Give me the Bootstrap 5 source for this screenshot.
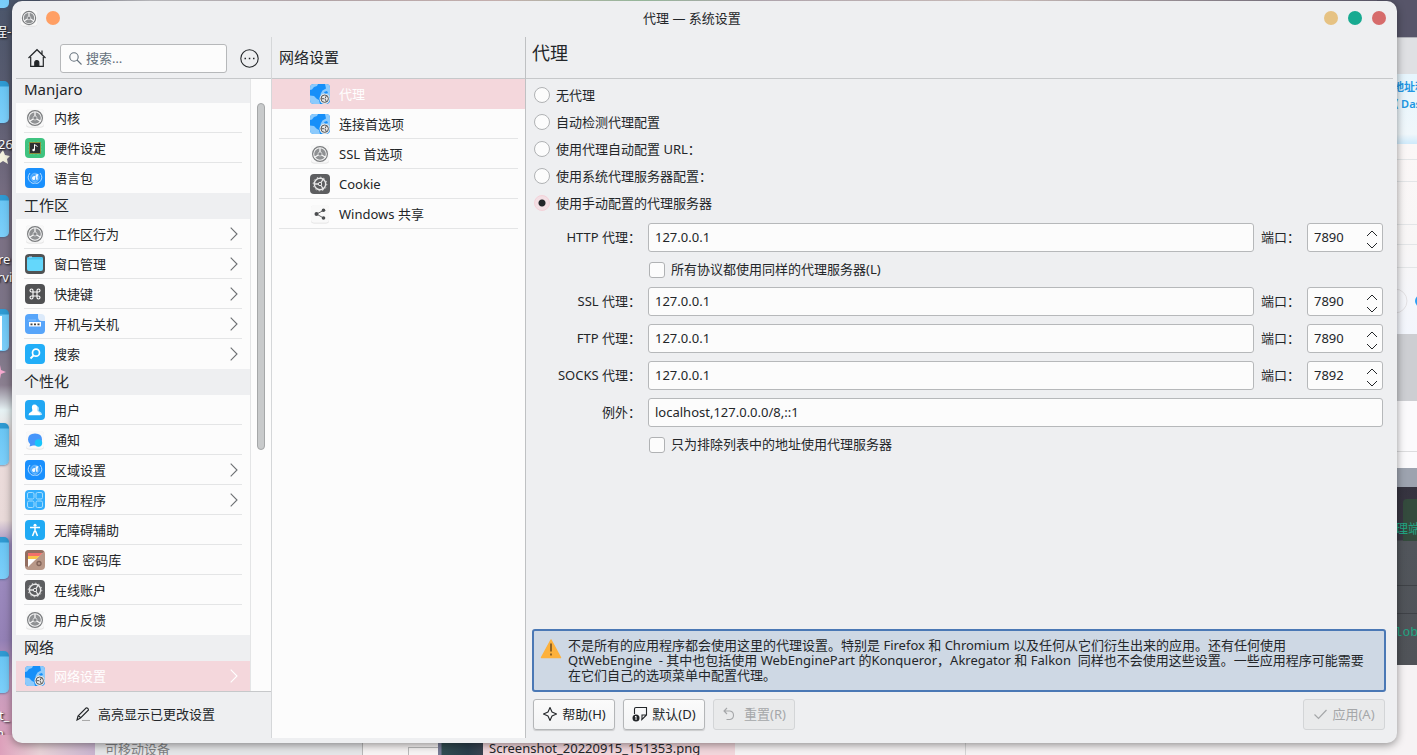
<!DOCTYPE html>
<html lang="zh-CN">
<head>
<meta charset="utf-8">
<meta name="viewport" content="width=device-width, initial-scale=1">
<title>代理 — 系统设置</title>
<link href="https://cdn.jsdelivr.net/npm/bootstrap@5.3.0/dist/css/bootstrap.min.css" rel="stylesheet">
<style>
:root{--face:#eeeff1;--view:#fcfcfc;--ink:#232629;--line:#c6c8ca;--soft:#e4e5e6;--pick:#f4d7dc}
html,body{height:100%}
body{font-family:"Noto Sans","Noto Sans CJK SC",sans-serif;font-size:13px;line-height:20px;color:var(--ink);background:#f6f3f4;overflow:hidden}
button,input{font-family:inherit;font-size:13px;color:inherit}
a{color:inherit;text-decoration:none}
svg{display:block;flex:none}
/* desktop behind the window */
.desk{position:absolute;inset:0;overflow:hidden}
.desk>*{position:absolute}
.wall{left:0;top:0;bottom:0;width:40px;background:linear-gradient(#4b566b 0,#5a5c70 100px,#7b7084 210px,#7b7487 340px,#8b7f90 385px,#e6f2f4 410px,#ecdcdb 440px,#e9dad9 520px,#a08fc2 545px,#9481b6 640px,#c89dbe 680px,#dd9fbb 100%)}
.roof{left:0;right:0;top:0;height:40px;background:linear-gradient(90deg,#56617a 0,#7c7c8c 60px,#cfcfd3 150px,#c9b9bd 320px,#dfc7c5 500px,#a9cfae 640px,#c6bac3 760px,#e4d5d2 1000px,#8f8793 1250px,#575569 100%)}
.dir{left:-20px;width:29px;height:42px;border-radius:5px;background:linear-gradient(#2f9ad2 0,#2f9ad2 5px,#6bc6f4 6px,#7ccffa 100%);box-shadow:0 1px 2px #35588088}
.tag{color:#fff;text-shadow:1px 1px 2px #000;white-space:nowrap}
.rear{right:0;width:40px}
.blue{color:#2196e3;font-weight:600;font-size:11px;white-space:nowrap}
.green{color:#22a583;font-family:"Liberation Mono","Noto Sans CJK SC",monospace;white-space:nowrap}
/* window */
.shell{padding:1px 20px 12px 12px}
.win{background:var(--face);border-radius:10px;box-shadow:0 2px 8px #0000006b}
.titlebar{height:36px;padding:0 11px 2px 8px}
.dot{width:14px;height:14px;border:0;border-radius:50%;padding:0}
.panes{padding:0 4px 5px}
.side{width:256px;border-right:1px solid #d5d7d9}
.mid{width:254px;border-right:1px solid #bfc1c3}
.bar{height:42px;border-bottom:1px solid var(--line)}
.view{background:var(--view)}
.find{width:167px;height:29px;background:var(--view);border:1px solid #b6b8ba;border-radius:3px;color:#66727d}
.find input,.spin input{border:0;background:transparent;outline:0;min-width:0;padding:0}
.find input::placeholder{color:#66727d;opacity:1}
.plain{border:0;background:none;padding:0}
.big{font-size:15px}
.grp{background:var(--face);font-size:15px;height:26px;line-height:24px;margin:0;padding-left:8px;font-weight:400}
.grp.cut{height:24px;line-height:20px}
.ent{height:30px;padding:0 12px 0 9px;gap:9px;position:relative}
.ent::after{content:"";position:absolute;left:8px;right:8px;bottom:0;height:1px;background:var(--soft)}
.ent.end::after,.ent.on::after{display:none}
.ent.on{background:var(--pick);color:#fff}
.mid .ent{padding-left:38px}
.mid .ent::after{left:7px;right:7px}
.ent .go{margin-left:auto;color:#6d7073}
.ent.on .go{color:#fff}
.track{width:21px;border-left:1px solid var(--soft);padding:24px 0 0 6px}
.thumb{width:8px;height:59%;border-radius:4px;background:#c8cacb;border:1px solid #a5a7a8}
.opt{gap:6px;height:27px}
.form-check-input{width:16px;height:16px;margin:0;border:1px solid #b0b2b4;background-color:var(--view);flex:none;box-shadow:none}
.form-check-input[type=checkbox]{border-radius:3px}
.form-check-input[type=radio]:checked{background-color:#f3dfe4;border-color:#f4d2d9;background-image:radial-gradient(circle,#232629 0,#232629 3px,transparent 4px)}
.pform{display:grid;grid-template-columns:107px minmax(0,1fr) auto 76px;gap:8px 7px;align-items:center}
.pform>label{text-align:right;white-space:nowrap;padding-bottom:2px}
.field{height:29px;background:var(--view);border:1px solid #b6b8ba;border-radius:3px;padding:0 6px 2px;width:100%;min-width:0}
.wide{grid-column:2/-1}
.tick{height:19px;gap:6px;padding-left:1px}
.tick label{padding-bottom:2px}
.spin input{width:40px}
.spin button{height:12px;display:flex;align-items:flex-end}
.steps{margin-right:-2px}
.note{border:2px solid #4a78b5;border-radius:3px;background:#ced8e4;padding:7px 6px;gap:6px;line-height:15px;min-height:62px}
.tool{width:82px;height:31px;border:1px solid #b4b6b8;border-radius:3px;background:linear-gradient(#fbfbfb,#f2f3f4);box-shadow:0 1px 1px #00000026;padding:0 0 2px;white-space:nowrap}
.tool:disabled{background:#e9eaeb;border-color:#d3d5d7;box-shadow:none;color:#a5a7a9}
</style>
</head>
<body>
<svg width="0" height="0" class="position-absolute" aria-hidden="true">
 <defs>
  <symbol id="gear" viewBox="0 0 20 20"><rect x="1" y="1.500" width="18" height="18" rx="3" fill="#dcdcdc"/><rect x="1" y="1" width="18" height="17.700" rx="3" fill="#f8f8f8"/><circle cx="10" cy="10" r="7.400" fill="none" stroke="#7b7d7f" stroke-width="1.200"/><circle cx="10" cy="10" r="5.800" fill="#8f9193"/><path d="M10 10V4M10 10l-5.500 3.300M10 10l5.500 3.300" stroke="#f8f8f8" stroke-width="1.300"/><circle cx="10" cy="10" r="2" fill="#85878a" stroke="#f8f8f8" stroke-width=".6"/></symbol>
  <symbol id="dgear" viewBox="0 0 20 20"><rect width="20" height="20" rx="4" fill="#5d5e60"/><circle cx="10" cy="10" r="5.700" fill="none" stroke="#e8e8e8" stroke-width="1.400"/><circle cx="10" cy="10" r="6.800" fill="none" stroke="#e8e8e8" stroke-width="1" stroke-dasharray="1.300 2.260"/><path d="M4.500 10H9M10.500 9.500l3-5M10.500 10.500l3 5" stroke="#e8e8e8" stroke-width="1.300"/><circle cx="10" cy="10" r="1.700" fill="#5d5e60" stroke="#e8e8e8"/></symbol>
  <symbol id="chip" viewBox="0 0 20 20"><rect width="20" height="20" rx="4" fill="#3fc380"/><path d="M3 6h14M3 9h14M3 12h14M6 3v14M9 3v14M13 3v14" stroke="#62d699" stroke-width=".8"/><rect x="4.500" y="4.500" width="11" height="11" fill="#2d3032" stroke="#8a8d3c"/><path d="M9.500 12V6.500l3 2" stroke="#fff" fill="none"/><circle cx="8.600" cy="12" r="1.300" fill="#fff"/></symbol>
  <symbol id="un" viewBox="0 0 20 20"><rect width="20" height="20" rx="4" fill="#1a90fd"/><circle cx="10" cy="9.500" r="4.300" fill="#45a6fd" stroke="#8fcaff" stroke-width=".6"/><path d="M5 5Q.8 10 6 14.500q2 1.500 4 .5 2 1 4-.5 5.200-4.500 1-9.500" fill="none" stroke="#b5dcff" stroke-width="1"/><path d="M7 10.500q0-3 3.500-2.500l-.5 3.500q-2 1.500-3-1zM10.500 6.500l3-.5-1 3 .3 2.500-1.500.5z" fill="#f2f9ff"/></symbol>
  <symbol id="winm" viewBox="0 0 20 20"><rect width="20" height="20" rx="4" fill="#505253"/><rect x="2" y="3" width="16" height="14" rx="2" fill="#64d7fb"/><path d="M2 5.500V5a2 2 0 0 1 2-2h12a2 2 0 0 1 2 2v.5z" fill="#48c4ef"/><path d="M4 3h3" stroke="#bdf"/></symbol>
  <symbol id="cmd" viewBox="0 0 20 20"><rect width="20" height="20" rx="4" fill="#505153"/><path d="M8 8h4v4H8zM8 8H6.500A1.500 1.500 0 1 1 8 6.500zM12 8V6.500A1.500 1.500 0 1 1 13.500 8zM8 12v1.500A1.500 1.500 0 1 1 6.500 12zM12 12h1.500a1.500 1.500 0 1 1-1.500 1.500z" fill="none" stroke="#fff" stroke-width="1.100"/></symbol>
  <symbol id="boot" viewBox="0 0 20 20"><path d="M4 0h9l7 7v9a4 4 0 0 1-4 4H4a4 4 0 0 1-4-4V4a4 4 0 0 1 4-4z" fill="#57a5fa"/><path d="M13 0h3a4 4 0 0 1 4 4v3h-3a4 4 0 0 1-4-4z" fill="#dceafa"/><path d="M3 6h8" stroke="#86bffb"/><rect x="4" y="8" width="12" height="4.500" fill="#fff"/><path d="M5.500 10.300h2M9 10.300h2M12.500 10.300h2" stroke="#444" stroke-width="1.700"/></symbol>
  <symbol id="look" viewBox="0 0 20 20"><rect width="20" height="20" rx="4" fill="#22aef8"/><circle cx="11" cy="8.700" r="3.500" fill="none" stroke="#fff" stroke-width="1.700"/><path d="m8.500 11.500-3 3" stroke="#fff" stroke-width="1.800"/></symbol>
  <symbol id="user" viewBox="0 0 20 20"><rect width="20" height="20" rx="4" fill="#21a7f3"/><path d="M11 6q4 0 2.500 5 3.500 1 3.500 4h-6z" fill="#bfe5fb"/><path d="M9.500 4.500q3.500 0 2.500 5-.5 1.500 1.500 2.500 2 .8 2 3.300H3.500q0-2.500 2.500-3.300 2-.8 1.300-2-1.500-5.500 2.200-5.500z" fill="#fff"/></symbol>
  <symbol id="bell" viewBox="0 0 20 20"><rect x="1" y="1.500" width="18" height="18" rx="3" fill="#dedede"/><rect x="1" y="1" width="18" height="17.700" rx="3" fill="#f9f9f9"/><path d="M3 9.500q0-6 7-6t7 6q0 6-7 6-1 0-2 0l-3.500 1 .7-2.300Q3 12.500 3 9.500z" fill="#4696fb"/><circle cx="13.500" cy="13" r="3.700" fill="#19c5fa"/></symbol>
  <symbol id="apps" viewBox="0 0 20 20"><rect width="20" height="20" rx="4" fill="#32adfc"/><g fill="none" stroke="#a2ddff"><rect x="2.500" y="2.500" width="6.500" height="6.500" rx="1.500"/><rect x="11" y="2.500" width="6.500" height="6.500" rx="1.500"/><rect x="2.500" y="11" width="6.500" height="6.500" rx="1.500"/><rect x="11" y="11" width="6.500" height="6.500" rx="1.500"/></g></symbol>
  <symbol id="acc" viewBox="0 0 20 20"><rect width="20" height="20" rx="4" fill="#20aaf4"/><circle cx="10" cy="5.200" r="1.500" fill="#fff"/><path d="M5 7.500h10M10 7v5M9.500 11l-2 5M10.500 11l2 5" stroke="#fff" stroke-width="1.500" fill="none"/></symbol>
  <symbol id="wallet" viewBox="0 0 20 20"><rect width="20" height="20" rx="4" fill="#b89888"/><path d="M0 16V4a4 4 0 0 1 4-4h12a4 4 0 0 1 3 1.500L3 17z" fill="#926e61"/><path d="M3 3h14.500L3 17z" fill="#fff"/><path d="M3 3h14.500l-3 3H3z" fill="#f2706a"/><path d="M3 6h11.500l-3 3H3z" fill="#f8c44a"/><circle cx="14" cy="13.500" r="2" fill="none" stroke="#806358" stroke-width="1.300"/></symbol>
  <symbol id="net" viewBox="0 0 20 20"><rect width="20" height="20" rx="4" fill="#168ff9"/><path d="M0 6V4a4 4 0 0 1 4-4h4L7 2 4 3 2 5.500zM0 11.500l4 .5 3 3 2 1 1 4H4a4 4 0 0 1-4-4z" fill="#8ccafc"/><path d="M15 0h1a4 4 0 0 1 4 4v9h-9l-.500-3 2-3.500 3.500-2z" fill="#8ccafc"/><path d="M14 8l3-1 1 2-3 1z" fill="#168ff9"/><circle cx="14.700" cy="14.700" r="5.200" fill="#e8e8e8"/><circle cx="14.700" cy="14.700" r="3.700" fill="none" stroke="#55585a" stroke-width="1"/><path d="M11.200 14.700H14M15 14.500l1.500-2.800M15 15l1.500 2.800" stroke="#55585a"/></symbol>
  <symbol id="share" viewBox="0 0 20 20"><rect x="1" y="1.500" width="18" height="18" rx="3" fill="#dedede"/><rect x="1" y="1" width="18" height="17.700" rx="3" fill="#f9f9f9"/><path d="m13.500 6.500-7 3.500 7 4" fill="none" stroke="#666"/><g fill="#4b4d4f"><circle cx="6.500" cy="10" r="2"/><circle cx="13.500" cy="6.300" r="1.800"/><circle cx="13.500" cy="14" r="1.800"/></g></symbol>
  <symbol id="go" viewBox="0 0 8 14"><path d="m.7.700 6.300 6.300-6.300 6.300" fill="none" stroke="currentColor" stroke-width="1.100"/></symbol>
  <symbol id="up" viewBox="0 0 12 7"><path d="m1 6 5-5 5 5" fill="none" stroke="currentColor"/></symbol>
  <symbol id="dn" viewBox="0 0 12 7"><path d="m1 1 5 5 5-5" fill="none" stroke="currentColor"/></symbol>
 </defs>
</svg>

<div class="desk" aria-hidden="true">
  <div class="roof"></div>
  <div class="wall"></div>
  <div class="dir" style="top:-34px"></div><div class="dir" style="top:81px"></div><div class="dir" style="top:195px"></div><div class="dir" style="top:309px"></div><div class="dir" style="top:423px"></div><div class="dir" style="top:537px"></div><div class="dir" style="top:651px"></div>
  <svg style="left:0;top:140px" width="14" height="420"><path d="m3 10 2 5 5 1-3 3 1 5-5-3-3 2v-9z" fill="#f4f2df"/><path d="M0 176h2v34H0z" fill="#fff"/><path d="m0 225 1 5 5 2-5 2-1 5z" fill="#f6a9cf"/></svg>
  <span class="tag" style="left:-6px;top:21px">程-</span>
  <span class="tag" style="left:-2px;top:134px">26</span>
  <span class="tag" style="left:-2px;top:249px">re</span>
  <span class="tag" style="left:-3px;top:267px">rvi</span>
  <span class="tag" style="left:-1px;top:705px">t_</span>
  <span class="tag" style="left:-4px;top:723px">n</span>

  <div class="rear" style="top:0;height:37px;background:#575569"></div>
  <div class="rear" style="top:37px;height:37px;background:#dfe0e3;border-top:1px solid #b0b1b8"></div>
  <div class="rear" style="top:74px;height:70px;background:linear-gradient(#e6f5fd,#f0f7fb 60px,#cfeafb)"></div>
  <div class="rear" style="top:144px;height:190px;background:linear-gradient(#fbf7f7,#f8f6f6 100px,#f3f6fd)"></div>
  <svg class="rear" style="top:144px" width="40" height="190"><path d="M0 15.500h40M0 37.500h40M0 80.500h40M0 100.500h40M0 123.500h40" stroke="#e3e5e7"/><circle cx="18" cy="157" r="12" fill="none" stroke="#e3e1e4"/><circle cx="44" cy="157" r="6" fill="#2ba0f5"/></svg>
  <div class="rear" style="top:334px;height:67px;background:#cdced2"></div>
  <div class="rear" style="top:401px;height:67px;background:#fbfafc"></div>
  <div class="rear" style="top:451px;height:1px;background:#dcdcde"></div>
  <div class="rear" style="top:468px;height:19px;background:#9da3af"></div>
  <div class="rear" style="top:487px;height:178px;background:linear-gradient(#35333f,#3a3843 53px,#51555b 54px,#505358)"></div>
  <div style="right:0;top:499px;width:14px;height:42px;background:#344b3d;border-radius:4px 0 0 0"></div>
  <div class="rear" style="top:585px;height:1px;background:#3f4247"></div>
  <div class="rear" style="top:613px;height:1px;background:#3f4247"></div>
  <span class="blue" style="right:-9px;top:77px">地址和</span>
  <span class="blue" style="right:-4px;top:94px">《 Das</span>
  <span class="green" style="right:-4px;top:520px">理端</span>
  <span class="green" style="right:-1px;top:623px">lob</span>

  <div style="left:0;bottom:0;width:95px;height:20px;background:linear-gradient(90deg,#dda0bb,#e9d3d8 40px,#c9b4cf)"></div>
  <div style="left:95px;bottom:0;width:268px;height:30px;background:#e5e6e8;border-right:1px solid #b8b8b8"></div>
  <div style="left:363px;bottom:0;width:75px;height:30px;background:#f7f4f4"></div>
  <div style="left:408px;bottom:0;width:32px;height:8px;border-left:1px solid #b9b9b9;border-top:1px solid #b9b9b9"></div>
  <div style="left:438px;bottom:0;width:45px;height:30px;background:linear-gradient(90deg,#777b96 3px,#324d51 4px,#2a3e4b 30px,#3b4350)"></div>
  <div style="left:483px;bottom:0;width:252px;height:30px;background:#f2d7dc"></div>
  <div style="left:965px;bottom:0;width:1px;height:12px;background:#d5d5d5"></div>
  <span style="left:105px;top:739px;color:#7f8183">可移动设备</span>
  <span style="left:489px;top:738px">Screenshot_20220915_151353.png</span>
</div>

<div class="shell position-relative vh-100">
<main class="win h-100 d-flex flex-column">
  <header class="titlebar d-flex align-items-center">
    <svg width="18" height="18" class="me-2"><use href="#gear"/></svg>
    <button class="dot" style="background:#ff9f64" aria-label="置顶"></button>
    <div class="flex-grow-1 text-center">代理 — 系统设置</div>
    <div class="d-flex" style="gap:10px">
      <button class="dot" style="background:#e6c283" aria-label="最小化"></button>
      <button class="dot" style="background:#17aa91" aria-label="最大化"></button>
      <button class="dot" style="background:#d66b6b" aria-label="关闭"></button>
    </div>
  </header>

  <div class="panes d-flex flex-grow-1" style="min-height:0">
    <nav class="side d-flex flex-column flex-shrink-0" aria-label="类别">
      <div class="bar d-flex align-items-center flex-shrink-0 justify-content-between" style="padding:1px 12px 0 11px">
        <button class="plain" aria-label="主页"><svg width="20" height="20" viewBox="0 0 20 20" fill="none" stroke="#232629" stroke-width="1.200"><path d="m1.500 10 8.500-8.300L18.500 10M3.700 9v9.400h12.600V9M15 6V2.500"/><path d="M7.800 18v-3.500a2 2 0 0 1 4 0V18z" fill="#232629"/></svg></button>
        <div class="find d-flex align-items-center gap-1 px-2">
          <svg width="13" height="13" viewBox="0 0 13 13" fill="none" stroke="#66727d" stroke-width="1.100"><circle cx="5" cy="5" r="4.200"/><path d="m8 8 4.500 4.500"/></svg>
          <input type="search" placeholder="搜索…" aria-label="搜索" class="w-100">
        </div>
        <button class="plain" aria-label="更多"><svg width="19" height="19" viewBox="0 0 19 19"><circle cx="9.500" cy="9.500" r="8.700" fill="none" stroke="#232629" stroke-width="1.100"/><path d="M4.500 9.500H6M8.800 9.500h1.500M13 9.500h1.500" stroke="#232629" stroke-width="1.600"/></svg></button>
      </div>
      <div class="view d-flex flex-grow-1 overflow-hidden" style="min-height:0">
        <div class="flex-grow-1">
          <h2 class="grp cut">Manjaro</h2>
          <a href="#" class="ent d-flex align-items-center"><svg width="20" height="20"><use href="#gear"/></svg>内核</a>
          <a href="#" class="ent d-flex align-items-center"><svg width="20" height="20"><use href="#chip"/></svg>硬件设定</a>
          <a href="#" class="ent end d-flex align-items-center"><svg width="20" height="20"><use href="#un"/></svg>语言包</a>
          <h2 class="grp">工作区</h2>
          <a href="#" class="ent d-flex align-items-center"><svg width="20" height="20"><use href="#gear"/></svg>工作区行为<svg class="go" width="8" height="14"><use href="#go"/></svg></a>
          <a href="#" class="ent d-flex align-items-center"><svg width="20" height="20"><use href="#winm"/></svg>窗口管理<svg class="go" width="8" height="14"><use href="#go"/></svg></a>
          <a href="#" class="ent d-flex align-items-center"><svg width="20" height="20"><use href="#cmd"/></svg>快捷键<svg class="go" width="8" height="14"><use href="#go"/></svg></a>
          <a href="#" class="ent d-flex align-items-center"><svg width="20" height="20"><use href="#boot"/></svg>开机与关机<svg class="go" width="8" height="14"><use href="#go"/></svg></a>
          <a href="#" class="ent end d-flex align-items-center"><svg width="20" height="20"><use href="#look"/></svg>搜索<svg class="go" width="8" height="14"><use href="#go"/></svg></a>
          <h2 class="grp">个性化</h2>
          <a href="#" class="ent d-flex align-items-center"><svg width="20" height="20"><use href="#user"/></svg>用户</a>
          <a href="#" class="ent d-flex align-items-center"><svg width="20" height="20"><use href="#bell"/></svg>通知</a>
          <a href="#" class="ent d-flex align-items-center"><svg width="20" height="20"><use href="#un"/></svg>区域设置<svg class="go" width="8" height="14"><use href="#go"/></svg></a>
          <a href="#" class="ent d-flex align-items-center"><svg width="20" height="20"><use href="#apps"/></svg>应用程序<svg class="go" width="8" height="14"><use href="#go"/></svg></a>
          <a href="#" class="ent d-flex align-items-center"><svg width="20" height="20"><use href="#acc"/></svg>无障碍辅助</a>
          <a href="#" class="ent d-flex align-items-center"><svg width="20" height="20"><use href="#wallet"/></svg>KDE 密码库</a>
          <a href="#" class="ent d-flex align-items-center"><svg width="20" height="20"><use href="#dgear"/></svg>在线账户</a>
          <a href="#" class="ent end d-flex align-items-center"><svg width="20" height="20"><use href="#gear"/></svg>用户反馈</a>
          <h2 class="grp">网络</h2>
          <a href="#" class="ent on d-flex align-items-center" aria-current="page"><svg width="20" height="20"><use href="#net"/></svg>网络设置<svg class="go" width="8" height="14"><use href="#go"/></svg></a>
        </div>
        <div class="track flex-shrink-0"><div class="thumb"></div></div>
      </div>
      <button class="plain d-flex align-items-center justify-content-center flex-shrink-0 gap-2" style="height:47px;border-top:1px solid var(--line);padding:0 0 2px 4px">
        <svg width="14" height="14" viewBox="0 0 14 14" fill="none" stroke="#232629" stroke-width="1.100"><path d="m1 13 1-4 8-8q2-.5 2.500 2l-8 8-3.500 2zM2 9q2 0 2.500 2"/><path d="M6 13.500h8" stroke="#aaa"/></svg>
        高亮显示已更改设置
      </button>
    </nav>

    <nav class="mid d-flex flex-column flex-shrink-0 view" aria-label="网络设置">
      <div class="bar big d-flex align-items-center flex-shrink-0" style="background:var(--face);padding:0 0 2px 7px">网络设置</div>
      <a href="#" class="ent on d-flex align-items-center" aria-current="page"><svg width="20" height="20"><use href="#net"/></svg>代理</a>
      <a href="#" class="ent d-flex align-items-center"><svg width="20" height="20"><use href="#net"/></svg>连接首选项</a>
      <a href="#" class="ent d-flex align-items-center"><svg width="20" height="20"><use href="#gear"/></svg>SSL 首选项</a>
      <a href="#" class="ent d-flex align-items-center"><svg width="20" height="20"><use href="#dgear"/></svg>Cookie</a>
      <a href="#" class="ent d-flex align-items-center"><svg width="20" height="20"><use href="#share"/></svg>Windows 共享</a>
    </nav>

    <section class="d-flex flex-column flex-grow-1" style="min-width:0">
      <div class="bar flex-shrink-0" style="padding:5px 6px 0"><h1 class="m-0 fw-normal" style="font-size:18px;line-height:22px">代理</h1></div>
      <form class="d-flex flex-column flex-grow-1" style="padding:2px 7px 8px 6px" onsubmit="return false">
        <fieldset style="padding-left:2px">
          <div class="opt d-flex align-items-center"><input class="form-check-input" type="radio" name="mode" id="m1"><label for="m1">无代理</label></div>
          <div class="opt d-flex align-items-center"><input class="form-check-input" type="radio" name="mode" id="m2"><label for="m2">自动检测代理配置</label></div>
          <div class="opt d-flex align-items-center"><input class="form-check-input" type="radio" name="mode" id="m3"><label for="m3">使用代理自动配置 URL：</label></div>
          <div class="opt d-flex align-items-center"><input class="form-check-input" type="radio" name="mode" id="m4"><label for="m4">使用系统代理服务器配置：</label></div>
          <div class="opt d-flex align-items-center"><input class="form-check-input" type="radio" name="mode" id="m5" checked><label for="m5">使用手动配置的代理服务器</label></div>
        </fieldset>
        <div class="pform" style="padding:7px 3px 0 2px">
          <label for="http">HTTP 代理：</label><input class="field" id="http" type="text" value="127.0.0.1"><label for="p1">端口：</label>
          <div class="field spin d-flex align-items-center justify-content-between"><input id="p1" type="text" inputmode="numeric" value="7890"><div class="steps"><button type="button" class="plain" aria-label="增加"><svg width="12" height="7"><use href="#up"/></svg></button><button type="button" class="plain" aria-label="减少"><svg width="12" height="7"><use href="#dn"/></svg></button></div></div>

          <div class="wide tick d-flex align-items-center"><input class="form-check-input" type="checkbox" id="same"><label for="same">所有协议都使用同样的代理服务器(L)</label></div>

          <label for="ssl">SSL 代理：</label><input class="field" id="ssl" type="text" value="127.0.0.1"><label for="p2">端口：</label>
          <div class="field spin d-flex align-items-center justify-content-between"><input id="p2" type="text" inputmode="numeric" value="7890"><div class="steps"><button type="button" class="plain" aria-label="增加"><svg width="12" height="7"><use href="#up"/></svg></button><button type="button" class="plain" aria-label="减少"><svg width="12" height="7"><use href="#dn"/></svg></button></div></div>

          <label for="ftp">FTP 代理：</label><input class="field" id="ftp" type="text" value="127.0.0.1"><label for="p3">端口：</label>
          <div class="field spin d-flex align-items-center justify-content-between"><input id="p3" type="text" inputmode="numeric" value="7890"><div class="steps"><button type="button" class="plain" aria-label="增加"><svg width="12" height="7"><use href="#up"/></svg></button><button type="button" class="plain" aria-label="减少"><svg width="12" height="7"><use href="#dn"/></svg></button></div></div>

          <label for="socks">SOCKS 代理：</label><input class="field" id="socks" type="text" value="127.0.0.1"><label for="p4">端口：</label>
          <div class="field spin d-flex align-items-center justify-content-between"><input id="p4" type="text" inputmode="numeric" value="7892"><div class="steps"><button type="button" class="plain" aria-label="增加"><svg width="12" height="7"><use href="#up"/></svg></button><button type="button" class="plain" aria-label="减少"><svg width="12" height="7"><use href="#dn"/></svg></button></div></div>

          <label for="exc">例外：</label><input class="field wide" id="exc" type="text" value="localhost,127.0.0.0/8,::1">
          <div class="wide tick d-flex align-items-center"><input class="form-check-input" type="checkbox" id="only"><label for="only">只为排除列表中的地址使用代理服务器</label></div>
        </div>

        <div class="note d-flex mt-auto" role="note">
          <svg width="22" height="22" viewBox="0 0 22 22"><path d="M11 2 20.500 19.500h-19z" fill="#fdb13c" stroke="#fdb13c" stroke-width="1.500" stroke-linejoin="round"/><path d="M11 5.500v8M11 15.500v2" stroke="#6b4a1c" stroke-width="1.500"/></svg>
          <div>不是所有的应用程序都会使用这里的代理设置。特别是 Firefox 和 Chromium 以及任何从它们衍生出来的应用。还有任何使用<br>QtWebEngine&nbsp; - 其中也包括使用 WebEnginePart 的Konqueror，Akregator 和 Falkon&nbsp; 同样也不会使用这些设置。一些应用程序可能需要<br>在它们自己的选项菜单中配置代理。</div>
        </div>
        <div class="d-flex gap-2" style="padding:7px 1px 0">
          <button type="button" class="tool d-flex align-items-center justify-content-center gap-1"><svg width="16" height="16" viewBox="0 0 16 16" fill="none" stroke="#232629" stroke-width="1.100"><path d="M8 1.500 10 6 14.500 8 10 10 8 14.500 6 10 1.500 8 6 6z" stroke-linejoin="round"/></svg>帮助(H)</button>
          <button type="button" class="tool d-flex align-items-center justify-content-center gap-1"><svg width="16" height="16" viewBox="0 0 16 16"><path d="M2.500 8V3a1.500 1.500 0 0 1 1.500-1.500h10.500V9L9.500 14H9M14.500 9h-4.500v4.500" fill="none" stroke="#232629" stroke-width="1.100"/><circle cx="4" cy="12" r="3.500" fill="#232629"/><path d="M4 10v4M3 11l1-1" stroke="#fff"/></svg>默认(D)</button>
          <button type="button" class="tool d-flex align-items-center justify-content-center gap-2" disabled><svg width="14" height="14" viewBox="0 0 14 14" fill="none" stroke="currentColor" stroke-width="1.100"><path d="M5 1 2 4l3 3M2 4h6q3.500.5 3.500 4.200T8 12.500H4.500"/></svg>重置(R)</button>
          <button type="button" class="tool d-flex align-items-center justify-content-center gap-1 ms-auto" disabled><svg width="15" height="14" viewBox="0 0 15 14" fill="none" stroke="currentColor" stroke-width="1.200"><path d="m1.500 7.500 4 4 8-8.500"/></svg>应用(A)</button>
        </div>
      </form>
    </section>
  </div>
</main>
</div>
<script src="https://cdn.jsdelivr.net/npm/bootstrap@5.3.0/dist/js/bootstrap.bundle.min.js"></script>
</body>
</html>
